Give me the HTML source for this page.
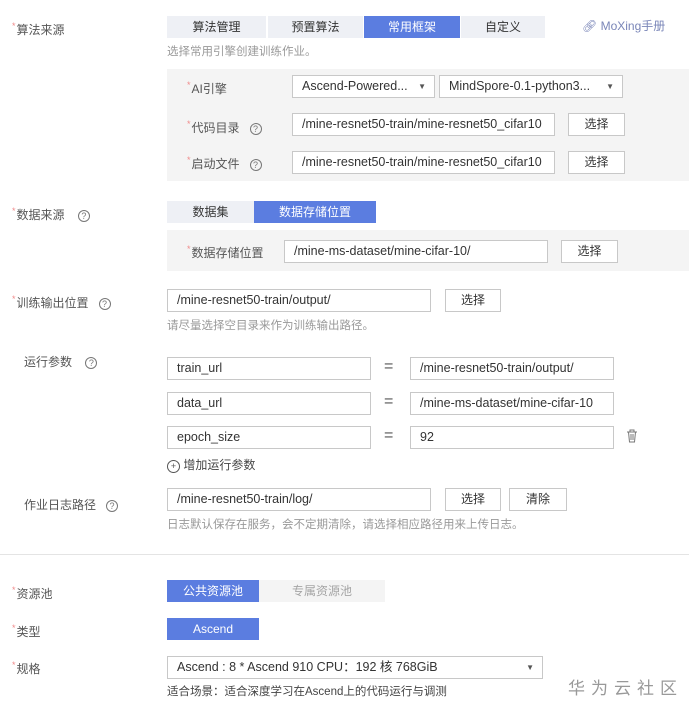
<!DOCTYPE html>
<html><head><meta charset="utf-8"><style>
*{box-sizing:border-box;margin:0;padding:0}
body{width:689px;height:709px;background:#fff;position:relative;overflow:hidden;font-family:"Liberation Sans","Noto Sans CJK SC",sans-serif;font-size:12px;color:#333}
.a{position:absolute;white-space:nowrap}
.lbl{color:#555;font-size:12px}
.st{color:#f08a8a;font-size:9px;vertical-align:top;margin-right:1px}
.q{display:inline-block;width:12px;height:12px;border:1px solid #777;border-radius:50%;font-size:9px;line-height:10px;text-align:center;color:#777}
.tab{position:absolute;height:22px;line-height:22px;text-align:center;background:#eef0f5;color:#333;font-size:12px}
.on{background:#5b7de0;color:#fff}
.inp{position:absolute;height:23px;border:1px solid #c8c8c8;background:#fff;line-height:21px;padding-left:9px;font-size:12.5px;color:#333;overflow:hidden;white-space:nowrap}
.btn{position:absolute;height:23px;border:1px solid #c8c8c8;background:#fff;line-height:21px;text-align:center;font-size:12px;color:#333}
.hint{position:absolute;color:#999;font-size:11.5px;white-space:nowrap}
.gray{position:absolute;background:#f4f4f4}
.arr{position:absolute;right:8px;top:0;font-size:8px;color:#555}
.eq{position:absolute;font-size:16px;color:#555}
</style></head><body>
<div class="a lbl" style="left:12px;top:21px"><span class="st">*</span>算法来源</div>
<div class="tab" style="left:167px;top:16px;width:99px">算法管理</div>
<div class="tab" style="left:268px;top:16px;width:95px">预置算法</div>
<div class="tab on" style="left:364px;top:16px;width:96px">常用框架</div>
<div class="tab" style="left:461px;top:16px;width:84px">自定义</div>
<div class="a" style="left:582px;top:17px;color:#7a86b8;font-size:12px">&#x1F517;&#xFE0E; <span style="font-size:12px">MoXing手册</span></div>
<div class="hint" style="left:167px;top:43px">选择常用引擎创建训练作业。</div>
<div class="gray" style="left:167px;top:69px;width:522px;height:112px"></div>
<div class="a lbl" style="left:187px;top:80px"><span class="st">*</span>AI引擎</div>
<div class="inp" style="left:292px;top:75px;width:143px">Ascend-Powered...<span class="arr">▼</span></div>
<div class="inp" style="left:439px;top:75px;width:184px">MindSpore-0.1-python3...<span class="arr">▼</span></div>
<div class="a lbl" style="left:187px;top:119px"><span class="st">*</span>代码目录 &nbsp;&nbsp;<span class="q">?</span></div>
<div class="inp" style="left:292px;top:113px;width:263px">/mine-resnet50-train/mine-resnet50_cifar10</div>
<div class="btn" style="left:568px;top:113px;width:57px">选择</div>
<div class="a lbl" style="left:187px;top:155px"><span class="st">*</span>启动文件 &nbsp;&nbsp;<span class="q">?</span></div>
<div class="inp" style="left:292px;top:151px;width:263px">/mine-resnet50-train/mine-resnet50_cifar10</div>
<div class="btn" style="left:568px;top:151px;width:57px">选择</div>

<div class="a lbl" style="left:12px;top:206px"><span class="st">*</span>数据来源 &nbsp;&nbsp;&nbsp;<span class="q">?</span></div>
<div class="tab" style="left:167px;top:201px;width:87px">数据集</div>
<div class="tab on" style="left:254px;top:201px;width:122px">数据存储位置</div>
<div class="gray" style="left:167px;top:230px;width:522px;height:41px"></div>
<div class="a lbl" style="left:187px;top:244px"><span class="st">*</span>数据存储位置</div>
<div class="inp" style="left:284px;top:240px;width:264px">/mine-ms-dataset/mine-cifar-10/</div>
<div class="btn" style="left:561px;top:240px;width:57px">选择</div>

<div class="a lbl" style="left:12px;top:294px"><span class="st">*</span>训练输出位置 &nbsp;&nbsp;<span class="q">?</span></div>
<div class="inp" style="left:167px;top:289px;width:264px">/mine-resnet50-train/output/</div>
<div class="btn" style="left:445px;top:289px;width:56px">选择</div>
<div class="hint" style="left:167px;top:317px">请尽量选择空目录来作为训练输出路径。</div>

<div class="a lbl" style="left:24px;top:353px">运行参数 &nbsp;&nbsp;&nbsp;<span class="q">?</span></div>
<div class="inp" style="left:167px;top:357px;width:204px">train_url</div><div class="eq" style="left:384px;top:358px">=</div>
<div class="inp" style="left:410px;top:357px;width:204px">/mine-resnet50-train/output/</div>
<div class="inp" style="left:167px;top:392px;width:204px">data_url</div><div class="eq" style="left:384px;top:393px">=</div>
<div class="inp" style="left:410px;top:392px;width:204px">/mine-ms-dataset/mine-cifar-10</div>
<div class="inp" style="left:167px;top:426px;width:204px">epoch_size</div><div class="eq" style="left:384px;top:427px">=</div>
<div class="inp" style="left:410px;top:426px;width:204px">92</div>
<svg class="a" style="left:626px;top:429px" width="12" height="14" viewBox="0 0 12 14"><path d="M1 3h10M4 3V1h4v2M2.5 3l1 10h5l1-10M5 5v6M7 5v6" fill="none" stroke="#777" stroke-width="1"/></svg>
<div class="a" style="left:167px;top:456px;color:#444"><span class="q" style="border-color:#555;color:#555;width:13px;height:13px;line-height:11px">+</span> 增加运行参数</div>

<div class="a lbl" style="left:24px;top:496px">作业日志路径 &nbsp;&nbsp;<span class="q">?</span></div>
<div class="inp" style="left:167px;top:488px;width:264px">/mine-resnet50-train/log/</div>
<div class="btn" style="left:445px;top:488px;width:56px">选择</div>
<div class="btn" style="left:509px;top:488px;width:58px">清除</div>
<div class="hint" style="left:167px;top:516px">日志默认保存在服务，会不定期清除，请选择相应路径用来上传日志。</div>

<div class="a" style="left:0;top:554px;width:689px;height:1px;background:#e4e4e4"></div>

<div class="a lbl" style="left:12px;top:585px"><span class="st">*</span>资源池</div>
<div class="tab on" style="left:167px;top:580px;width:92px">公共资源池</div>
<div class="tab" style="left:259px;top:580px;width:126px;background:#f4f4f4;color:#a5a5a5">专属资源池</div>
<div class="a lbl" style="left:12px;top:623px"><span class="st">*</span>类型</div>
<div class="tab on" style="left:167px;top:618px;width:92px">Ascend</div>
<div class="a lbl" style="left:12px;top:660px"><span class="st">*</span>规格</div>
<div class="inp" style="left:167px;top:656px;width:376px">Ascend : 8 * Ascend 910 CPU：192 核 768GiB<span class="arr">▼</span></div>
<div class="a" style="left:167px;top:683px;color:#444;font-size:11.5px">适合场景：适合深度学习在Ascend上的代码运行与调测</div>
<div class="a" style="left:568px;top:674px;color:#999;font-size:17px;letter-spacing:6px">华为云社区</div>
</body></html>
